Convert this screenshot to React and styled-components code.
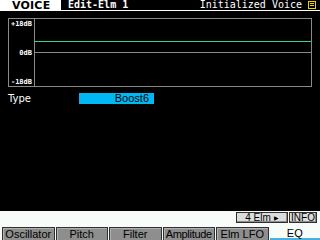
import styled, { createGlobalStyle } from "styled-components";

const Global = createGlobalStyle`
  html, body { margin: 0; padding: 0; background: #000; }
`;

const Screen = styled.div`
  width: 320px;
  height: 240px;
  background: #000;
  display: flex;
  flex-direction: column;
  overflow: hidden;
  color: #fff;
  font-family: "DejaVu Sans Mono", "Liberation Mono", monospace;
`;

const Header = styled.div`
  display: flex;
  height: 11px;
  flex-shrink: 0;
`;

const ModeTag = styled.div`
  width: 61px;
  height: 11px;
  background: #fff;
  color: #000;
  font: bold 11px "DejaVu Sans", sans-serif;
  line-height: 11px;
  padding-left: 12px;
  box-sizing: border-box;
  letter-spacing: 0.2px;
`;

const TitleBar = styled.div`
  flex: 1;
  display: flex;
  align-items: center;
  height: 11px;
  box-sizing: border-box;
  border-bottom: 1px solid #fff;
  padding: 0 4px 0 7px;
`;

const PageTitle = styled.span`
  font: bold 10px "DejaVu Sans Mono", monospace;
  line-height: 10px;
  flex: 1;
`;

const VoiceName = styled.span`
  font-size: 10px;
  line-height: 10px;
  margin-right: 6px;
`;

const Body = styled.div`
  flex: 1;
  padding: 7px 0 0 8px;
  display: flex;
  flex-direction: column;
`;

const Graph = styled.div`
  width: 304px;
  height: 69px;
  box-sizing: border-box;
  border: 1px solid #8a8a8a;
  display: flex;
`;

const Scale = styled.div`
  width: 26px;
  border-right: 1px solid #8a8a8a;
  box-sizing: border-box;
  display: flex;
  flex-direction: column;
  justify-content: space-between;
  align-items: flex-end;
  padding: 1px 2px 0 0;
  font: bold 7px "DejaVu Sans Mono", monospace;
  line-height: 8px;
`;

const Plot = styled.div`
  flex: 1;
  position: relative;
`;

const Line = styled.div`
  position: absolute;
  left: 0;
  right: 0;
  height: 1px;
  top: ${(p) => p.$top}px;
  background: ${(p) => p.$color};
`;

const ParamRow = styled.div`
  display: flex;
  align-items: center;
  margin-top: 6px;
  height: 11px;
`;

const ParamLabel = styled.span`
  width: 71px;
  font: 10px "DejaVu Sans", sans-serif;
`;

const ParamValue = styled.div`
  width: 75px;
  height: 11px;
  background: #00b8f4;
  color: #000;
  text-align: right;
  padding-right: 5px;
  box-sizing: border-box;
  font: 11px "Liberation Sans", sans-serif;
  line-height: 11px;
`;

const Footer = styled.div`
  height: 29px;
  background: #f8fcf8;
  display: flex;
  flex-direction: column;
  flex-shrink: 0;
`;

const ButtonRow = styled.div`
  display: flex;
  justify-content: flex-end;
  gap: 1px;
  padding: 1px 3px 0 0;
`;

const SoftButton = styled.div`
  width: ${(p) => p.$w}px;
  height: 11px;
  box-sizing: border-box;
  background: #dcdcdc;
  border: 1px solid #303030;
  box-shadow: inset -1px -1px 0 #8c8c8c;
  color: #000;
  font: 10px "Liberation Sans", sans-serif;
  line-height: 9px;
  white-space: nowrap;
  display: flex;
  align-items: center;
  justify-content: center;
  gap: 3px;
`;

const Arrow = styled.span`
  font-size: 6px;
  line-height: 6px;
`;

const Tabs = styled.div`
  display: flex;
  margin-top: auto;
  height: 13px;
  padding-left: 2px;
`;

const Tab = styled.div`
  flex: 1;
  box-sizing: border-box;
  background: ${(p) => (p.$active ? "#f8fcf8" : "#8e8e8e")};
  border: ${(p) => (p.$active ? "none" : "1px solid #303030")};
  border-bottom: ${(p) => (p.$active ? "2px solid #48b0e0" : "none")};
  box-shadow: ${(p) => (p.$active ? "none" : "inset 1px 1px 0 #b0b0b0")};
  margin-right: ${(p) => (p.$active ? 0 : 1)}px;
  color: #000;
  font: 11px "Liberation Sans", sans-serif;
  line-height: 12px;
  text-align: center;
  white-space: nowrap;
  letter-spacing: ${(p) => (p.$tight ? "-0.3px" : "0")};
`;

function MenuIcon() {
  return (
    <svg width="8" height="8" viewBox="0 0 8 8">
      <rect x="0.5" y="0.5" width="7" height="7" fill="none" stroke="#f0d000" />
      <rect x="2" y="2" width="4" height="1" fill="#f0d000" />
      <rect x="2" y="4" width="4" height="1" fill="#f0d000" />
    </svg>
  );
}

const tabs = ["Oscillator", "Pitch", "Filter", "Amplitude", "Elm LFO", "EQ"];

export default function App() {
  return (
    <>
      <Global />
      <Screen>
        <Header>
          <ModeTag>VOICE</ModeTag>
          <TitleBar>
            <PageTitle>Edit-Elm 1</PageTitle>
            <VoiceName>Initialized Voice</VoiceName>
            <MenuIcon />
          </TitleBar>
        </Header>
        <Body>
          <Graph>
            <Scale>
              <span>+18dB</span>
              <span>0dB</span>
              <span>-18dB</span>
            </Scale>
            <Plot>
              <Line $top={22} $color="#30d8a0" />
              <Line $top={33} $color="#8a8a8a" />
            </Plot>
          </Graph>
          <ParamRow>
            <ParamLabel>Type</ParamLabel>
            <ParamValue>Boost6</ParamValue>
          </ParamRow>
        </Body>
        <Footer>
          <ButtonRow>
            <SoftButton $w={52}>
              4 Elm<Arrow>▶</Arrow>
            </SoftButton>
            <SoftButton $w={28}>INFO</SoftButton>
          </ButtonRow>
          <Tabs>
            {tabs.map((t) => (
              <Tab key={t} $active={t === "EQ"} $tight={t === "Amplitude"}>
                {t}
              </Tab>
            ))}
          </Tabs>
        </Footer>
      </Screen>
    </>
  );
}
